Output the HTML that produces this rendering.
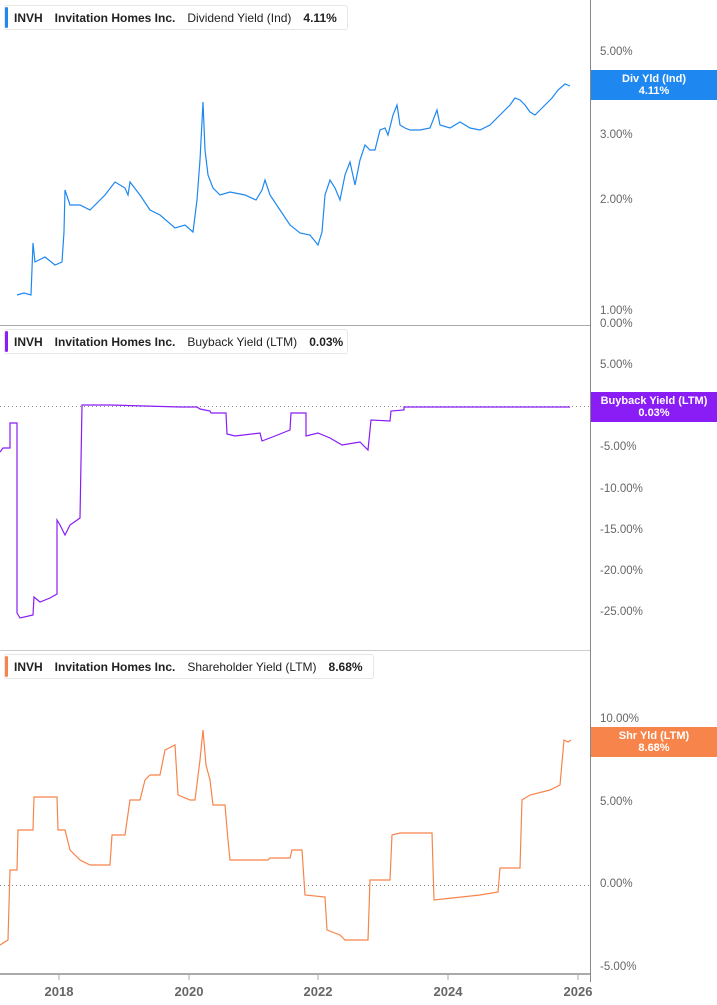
<!DOCTYPE html>
<html><head><meta charset="utf-8"><style>
body{margin:0;width:717px;height:1005px;background:#fff;font-family:"Liberation Sans",sans-serif;overflow:hidden;position:relative}
.leg{position:absolute;left:4px;height:25px;border:1px solid #e6e6e6;border-radius:3px;background:#fff;font-size:12px;font-weight:bold;color:#222;line-height:24px;padding-left:9px;box-sizing:border-box;white-space:nowrap}
.leg i{position:absolute;left:0;top:1px;bottom:1px;width:3px;border-radius:2px}
.leg span{margin-right:12px}
.leg .n{font-weight:normal;color:#222}
.ax{position:absolute;left:600px;font-size:11.5px;color:#666}
.tag{position:absolute;left:591px;width:126px;height:30px;color:#fff;font-size:11px;font-weight:bold;text-align:center;line-height:12px;padding-top:3px;box-sizing:border-box}
.yr{position:absolute;top:984px;width:40px;margin-left:-20px;text-align:center;font-size:13px;font-weight:bold;color:#666}
</style></head><body>
<svg width="717" height="1005" style="position:absolute;left:0;top:0">
<line x1="590.5" y1="0" x2="590.5" y2="982" stroke="#888"/>
<line x1="0" y1="325.5" x2="590" y2="325.5" stroke="#aaa"/>
<line x1="0" y1="650.5" x2="590" y2="650.5" stroke="#ccc"/>
<line x1="0" y1="974" x2="590" y2="974" stroke="#aaa" stroke-width="2"/>
<g stroke="#aaa"><line x1="59" y1="974" x2="59" y2="980"/><line x1="189" y1="974" x2="189" y2="980"/><line x1="318" y1="974" x2="318" y2="980"/><line x1="448" y1="974" x2="448" y2="980"/><line x1="578" y1="974" x2="578" y2="980"/></g>
<line x1="0" y1="406.5" x2="590" y2="406.5" stroke="#888" stroke-dasharray="1,3"/>
<line x1="0" y1="885.5" x2="590" y2="885.5" stroke="#888" stroke-dasharray="1,3"/>
<polyline fill="none" stroke="#1e88f0" stroke-width="1.2" points="17,295 24,293 31,295 33,243 35,262 45,257 55,265 62,262 64,232 65,190 70,205 80,205 90,210 105,195 115,182 125,188 128,195 130,182 140,195 150,210 160,215 175,228 185,225 193,232 197,200 200,160 203,102 205,150 208,175 213,188 220,195 230,192 245,195 256,200 262,190 265,180 270,195 280,210 290,225 300,233 310,235 318,245 322,232 325,195 330,180 335,188 340,200 345,175 350,162 355,185 360,160 365,145 370,150 375,150 380,130 385,128 388,135 393,115 397,105 400,125 405,128 410,130 420,130 430,128 437,110 440,125 450,128 460,122 470,128 480,130 490,125 500,115 505,110 510,105 515,98 520,100 525,105 530,112 535,115 540,110 545,105 552,98 558,90 565,84 570,86"/>
<polyline fill="none" stroke="#8a1cf5" stroke-width="1.2" points="0,452 3,448 10,448 10,423 17,423 17,613 20,618 33,615 34,597 40,602 50,598 57,594 57,520 60,525 65,535 70,525 80,518 82,405 110,405 180,407 197,407 200,409 210,411 211,413 226,413 227,434 235,436 260,433 262,441 275,436 290,430 291,413 306,413 306,436 318,433 330,438 342,445 360,442 368,450 371,420 390,421 391,411 404,410 404,407 570,407"/>
<polyline fill="none" stroke="#f7844a" stroke-width="1.2" points="0,945 8,940 10,870 17,870 18,830 33,830 34,797 57,797 58,830 65,830 70,850 80,860 90,865 110,865 112,835 125,835 130,800 140,800 145,780 150,775 160,775 165,750 175,745 178,795 190,800 195,800 200,760 203,730 206,765 210,780 213,805 225,805 228,840 230,860 268,860 270,858 290,858 292,850 302,850 305,895 325,897 327,930 340,935 345,940 368,940 370,880 385,880 390,880 392,835 400,833 420,833 432,833 434,900 480,895 498,892 500,868 520,868 522,800 530,795 550,790 560,785 564,740 568,742 571,740"/>
</svg>
<div class="leg" style="top:5px;width:344px"><i style="background:#1e88f0"></i><span>INVH</span><span>Invitation Homes Inc.</span><span class="n">Dividend Yield (Ind)</span>4.11%</div>
<div class="leg" style="top:329px;width:344px"><i style="background:#8a1cf5"></i><span>INVH</span><span>Invitation Homes Inc.</span><span class="n">Buyback Yield (LTM)</span>0.03%</div>
<div class="leg" style="top:654px;width:370px"><i style="background:#f7844a"></i><span>INVH</span><span>Invitation Homes Inc.</span><span class="n">Shareholder Yield (LTM)</span>8.68%</div>
<div class="ax" style="top:46px">5.00%</div>
<div class="ax" style="top:129px">3.00%</div>
<div class="ax" style="top:194px">2.00%</div>
<div class="ax" style="top:305px">1.00%</div>
<div class="ax" style="top:318px">0.00%</div>
<div class="ax" style="top:359px">5.00%</div>
<div class="ax" style="top:441px">-5.00%</div>
<div class="ax" style="top:483px">-10.00%</div>
<div class="ax" style="top:524px">-15.00%</div>
<div class="ax" style="top:565px">-20.00%</div>
<div class="ax" style="top:606px">-25.00%</div>
<div class="ax" style="top:713px">10.00%</div>
<div class="ax" style="top:796px">5.00%</div>
<div class="ax" style="top:878px">0.00%</div>
<div class="ax" style="top:961px">-5.00%</div>
<div class="tag" style="top:70px;background:#1e88f0">Div Yld (Ind)<br>4.11%</div>
<div class="tag" style="top:392px;background:#8a1cf5">Buyback Yield (LTM)<br>0.03%</div>
<div class="tag" style="top:727px;background:#f7844a">Shr Yld (LTM)<br>8.68%</div>
<div class="yr" style="left:59px">2018</div>
<div class="yr" style="left:189px">2020</div>
<div class="yr" style="left:318px">2022</div>
<div class="yr" style="left:448px">2024</div>
<div class="yr" style="left:578px">2026</div>
</body></html>
